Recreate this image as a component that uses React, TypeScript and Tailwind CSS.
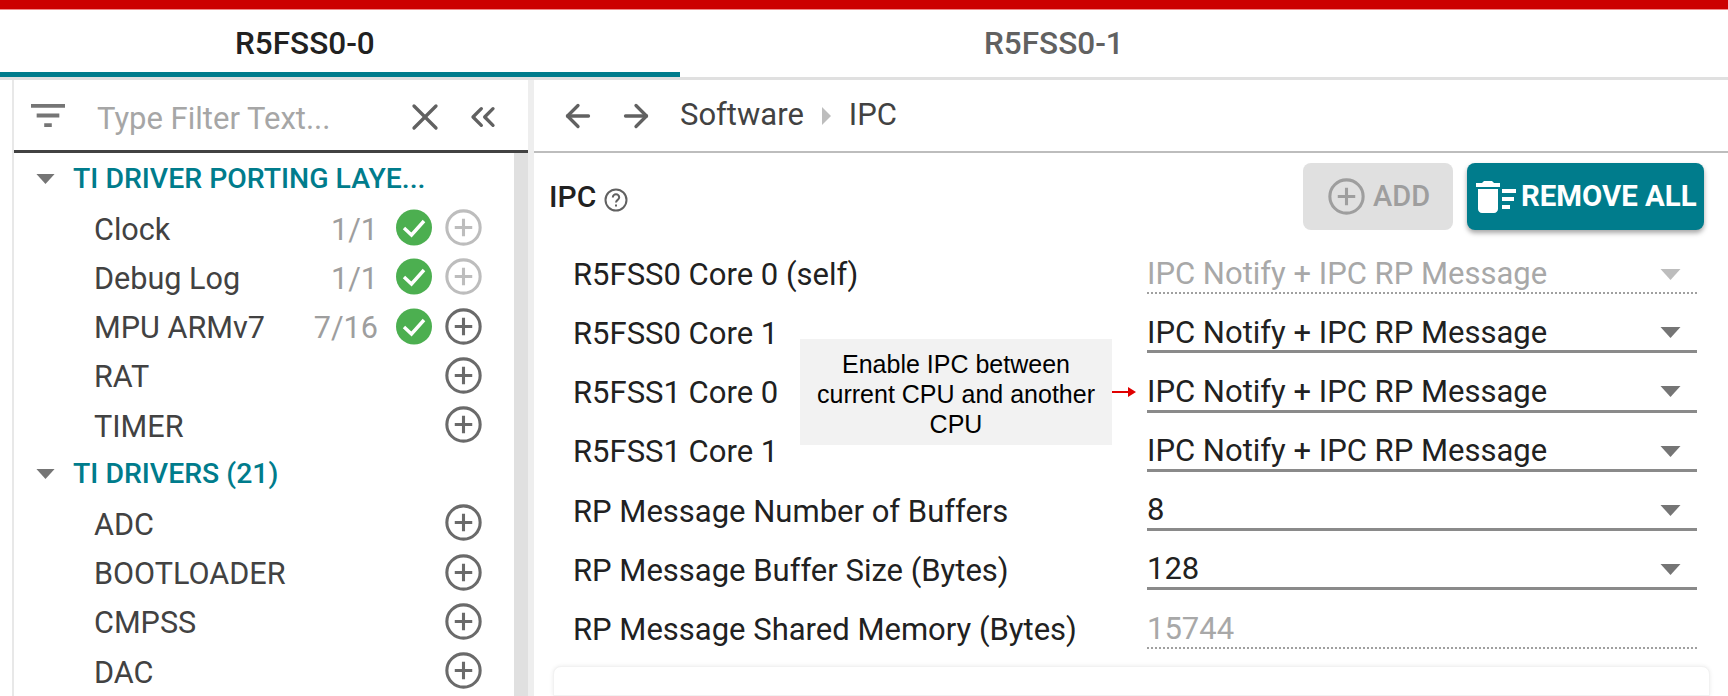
import React from 'react';
import { ArrowLeft, ArrowRight, ChevronsLeft, X } from 'lucide-react';

const driverPortingLayer = [
  { name: 'Clock', count: '1/1', ok: true, disabled: true },
  { name: 'Debug Log', count: '1/1', ok: true, disabled: true },
  { name: 'MPU ARMv7', count: '7/16', ok: true, disabled: false },
  { name: 'RAT' },
  { name: 'TIMER' },
];

const tiDrivers = [{ name: 'ADC' }, { name: 'BOOTLOADER' }, { name: 'CMPSS' }, { name: 'DAC' }];

const formRows = [
  { label: 'R5FSS0 Core 0 (self)', value: 'IPC Notify + IPC RP Message', readOnly: true, caret: true },
  { label: 'R5FSS0 Core 1', value: 'IPC Notify + IPC RP Message', caret: true },
  { label: 'R5FSS1 Core 0', value: 'IPC Notify + IPC RP Message', caret: true },
  { label: 'R5FSS1 Core 1', value: 'IPC Notify + IPC RP Message', caret: true },
  { label: 'RP Message Number of Buffers', value: '8', caret: true },
  { label: 'RP Message Buffer Size (Bytes)', value: '128', caret: true },
  { label: 'RP Message Shared Memory (Bytes)', value: '15744', readOnly: true },
];

const PlusCircle = ({ className }: { className: string }) => (
  <svg viewBox="0 0 36 36" className={className} fill="none" stroke="currentColor">
    <circle cx="18" cy="18" r="16.2" strokeWidth="3" />
    <path d="M18 9.5v17M9.5 18h17" strokeWidth="3" />
  </svg>
);

const CheckCircle = () => (
  <svg viewBox="0 0 36 36" className="h-[37px] w-[36px]">
    <circle cx="18" cy="18" r="18" fill="#4caf50" />
    <path d="M8 18.5l7.5 7L28 11.5" fill="none" stroke="#fff" strokeWidth="3.4" />
  </svg>
);

const Caret = ({ className }: { className: string }) => (
  <svg viewBox="0 0 20 11" className={className} fill="currentColor">
    <path d="M0 0h20L10 11z" />
  </svg>
);

const TreeHeader = ({ text }: { text: string }) => (
  <div className="flex h-[49.2px] items-center pl-[22px]">
    <Caret className="h-[10px] w-[19px] text-[#757575]" />
    <span className="ml-[18px] mt-[2px] truncate text-[28.4px] font-medium text-[#007c8c]">{text}</span>
  </div>
);

type TreeItem = { name: string; count?: string; ok?: boolean; disabled?: boolean };

const TreeRow = ({ item }: { item: TreeItem }) => (
  <div className="flex h-[49.2px] items-center pl-[80px] pr-[32px] text-[30.6px] text-[#424242]">
    <span className="mt-[4px] flex-1">{item.name}</span>
    {item.count && <span className="mr-[18px] mt-[4px] text-[#9e9e9e]">{item.count}</span>}
    {item.ok && <CheckCircle />}
    <PlusCircle className={`ml-[13px] h-[37px] w-[37px] ${item.disabled ? 'text-[#bdbdbd]' : 'text-[#6a6a6a]'}`} />
  </div>
);

const FormRow = ({ label, value, readOnly, caret }: { label: string; value: string; readOnly?: boolean; caret?: boolean }) => (
  <div className="flex h-[59.2px] items-stretch pl-[39px] pr-[31px] text-[31px]">
    <div className="flex w-[574px] items-center pt-[21px] text-[#212121]">{label}</div>
    <div
      className={`flex flex-1 items-center justify-between pr-[16px] pt-[21px] ${
        readOnly ? 'border-b-2 border-dotted border-[#a0a0a0] text-[#a8a8a8]' : 'border-b-[3px] border-[#8a8a8a] text-[#212121]'
      }`}
    >
      <span>{value}</span>
      {caret && <Caret className={`h-[11px] w-[21px] ${readOnly ? 'text-[#bdbdbd]' : 'text-[#757575]'}`} />}
    </div>
  </div>
);

export default function App() {
  return (
    <div className="relative flex h-[696px] flex-col overflow-hidden bg-white font-['Roboto',sans-serif]">
      <div className="h-[10px] border-b border-[#f08a8a] bg-[#cc0000]" />

      <div className="flex h-[62px] pt-[6px] text-[31.5px] font-medium">
        <div className="flex w-[680px] items-center pl-[235px] text-[#212121]">R5FSS0-0</div>
        <div className="flex flex-1 items-center pl-[304px] text-[#616161]">R5FSS0-1</div>
      </div>
      <div className="h-[5px] w-[680px] bg-[#007c8c]" />
      <div className="h-[3px] bg-[#e0e0e0]" />

      <div className="flex min-h-0 flex-1">
        {/* tree panel */}
        <div className="ml-[12px] flex w-[516px] flex-col border-l-2 border-[#e8e8e8]">
          <div className="flex h-[73px] items-center border-b-[3px] border-[#424242] pl-[17px] text-[#757575]">
            <svg viewBox="3 6 18 12" className="h-[23px] w-[34px]" preserveAspectRatio="none" fill="currentColor">
              <path d="M10 18h4v-2h-4v2zM3 6v2h18V6H3zm3 7h12v-2H6v2z" />
            </svg>
            <span className="ml-[32px] mt-[8px] w-[306px] text-[31px] text-[#a6a6a6]">Type Filter Text...</span>
            <X size={44} strokeWidth={1.8} className="mt-[3px] text-[#616161]" />
            <ChevronsLeft size={40} strokeWidth={2} className="ml-[16px] mt-[3px] text-[#616161]" />
          </div>
          <div className="flex min-h-0 flex-1">
            <div className="flex-1 pt-[1px]">
              <TreeHeader text="TI DRIVER PORTING LAYE..." />
              {driverPortingLayer.map((item) => (
                <TreeRow key={item.name} item={item} />
              ))}
              <TreeHeader text="TI DRIVERS (21)" />
              {tiDrivers.map((item) => (
                <TreeRow key={item.name} item={item} />
              ))}
            </div>
            <div className="w-[14px] bg-[#e0e0e0]" />
          </div>
        </div>
        <div className="w-[6px] bg-[#eeeeee]" />

        {/* config panel */}
        <div className="flex min-w-0 flex-1 flex-col">
          <div className="flex h-[73px] shrink-0 items-center border-b-2 border-[#bdbdbd] pl-[26px] text-[#616161]">
            <ArrowLeft size={36} strokeWidth={2.2} />
            <ArrowRight size={36} strokeWidth={2.2} className="ml-[22px]" />
            <span className="ml-[26px] text-[31px] text-[#424242]">Software</span>
            <svg viewBox="0 0 9 18" className="mx-[18px] h-[18px] w-[9px]" fill="#bdbdbd">
              <path d="M0 0l9 9-9 9z" />
            </svg>
            <span className="text-[31px] text-[#424242]">IPC</span>
          </div>

          <div className="flex h-[82px] shrink-0 items-start pl-[15px] pr-[24px] pt-[10px]">
            <div className="mt-[11px] flex items-center text-[30px] font-medium text-[#212121]">
              IPC
              <svg viewBox="0 0 24 24" className="ml-[8px] mt-[6px] h-[24px] w-[24px]" fill="none" stroke="#616161" strokeWidth="2">
                <circle cx="12" cy="12" r="10.5" />
                <path d="M8.8 9.5a3.2 3.2 0 0 1 6.4 0c0 2.4-3.2 2.4-3.2 5" />
                <path d="M12 16.5v2" />
              </svg>
            </div>
            <div className="ml-auto flex gap-[14px]">
              <div className="flex h-[67px] w-[150px] items-center rounded-lg bg-[#e0e0e0] pl-[25px] text-[29px] font-medium text-[#9e9e9e]">
                <PlusCircle className="mr-[8px] h-[37px] w-[37px]" />
                ADD
              </div>
              <div className="flex h-[67px] w-[237px] items-center rounded-lg bg-[#007c8c] pl-[9px] text-[29.4px] font-bold text-white shadow-[0_3px_5px_rgba(0,0,0,0.35)]">
                <svg viewBox="2 4 20 16" className="mr-[5px] h-[32px] w-[40px]" fill="currentColor">
                  <path d="M15 16h4v2h-4zm0-8h7v2h-7zm0 4h6v2h-6zM3 18c0 1.1.9 2 2 2h6c1.1 0 2-.9 2-2V8H3v10zM14 5h-3l-1-1H6L5 5H2v2h12z" />
                </svg>
                REMOVE ALL
              </div>
            </div>
          </div>

          {formRows.map((row) => (
            <FormRow key={row.label} {...row} />
          ))}

          <div className="ml-[19px] mr-[18px] mt-[17px] flex-1 rounded-t-lg border border-[#f2f2f2] bg-white shadow-[0_0_4px_rgba(0,0,0,0.08)]" />
        </div>
      </div>

      {/* annotation over the form */}
      <div className="absolute left-[800px] top-[339px] flex h-[106px] w-[312px] items-center justify-center bg-[#f2f2f2] px-[14px] pt-[4px] text-center font-['Liberation_Sans',sans-serif] text-[25px] leading-[30px] text-black">
        Enable IPC between current CPU and another CPU
      </div>
      <svg viewBox="0 0 24 12" className="absolute left-[1112px] top-[386px] h-[12px] w-[24px]" fill="#e00000">
        <path d="M0 5h16V1l8 5-8 5V7H0z" />
      </svg>
    </div>
  );
}
